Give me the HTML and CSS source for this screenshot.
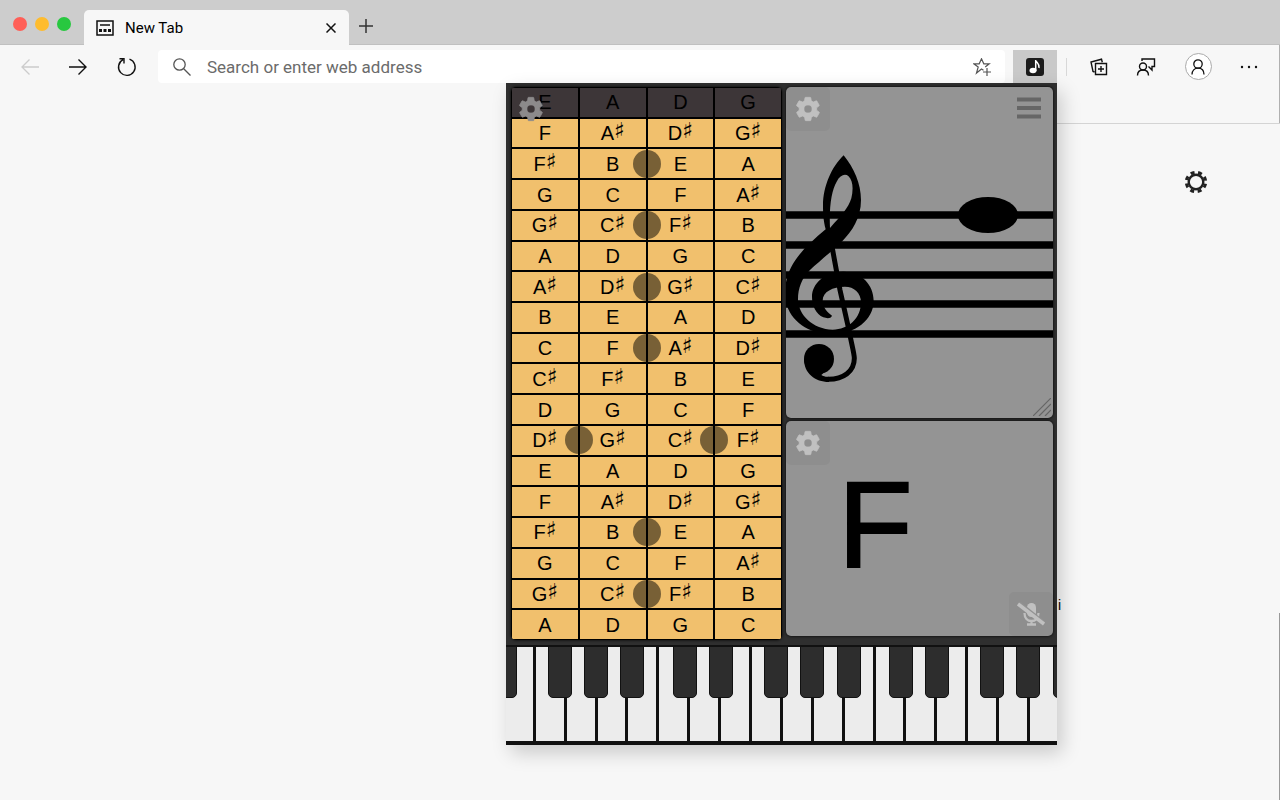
FILE: index.html
```html
<!DOCTYPE html>
<html lang="en">

<head>
    <meta charset="UTF-8">
    <title>New Tab</title>
    <link rel="stylesheet" href="styles.css">
</head>

<body>
    <svg class="defs" aria-hidden="true">
        <symbol id="gear" viewBox="0 0 24 24">
            <path d="M19.4 13a7.800 7.800 0 0 0 0-2l2.100-1.700a.5.5 0 0 0 .1-.6l-2-3.500a.5.5 0 0 0-.6-.2l-2.500 1a7.300 7.300 0 0 0-1.700-1L14.400 2.400a.5.5 0 0 0-.5-.4h-4a.5.5 0 0 0-.5.4L9 5a7.700 7.700 0 0 0-1.700 1l-2.500-1a.5.5 0 0 0-.6.2l-2 3.500a.5.5 0 0 0 .1.600L4.500 11a7.900 7.900 0 0 0 0 2l-2.100 1.700a.5.5 0 0 0-.1.600l2 3.500c.1.200.4.300.6.200l2.500-1a7.300 7.300 0 0 0 1.700 1l.4 2.600c0 .2.200.4.500.4h4c.2 0 .5-.2.500-.4l.4-2.600a7.700 7.700 0 0 0 1.700-1l2.500 1c.2.100.5 0 .6-.2l2-3.500a.5.5 0 0 0-.1-.6zM12 15.500a3.500 3.500 0 1 1 0-7 3.500 3.500 0 0 1 0 7z" fill="currentColor" stroke="currentColor" stroke-width=".6" />
        </symbol>
    </svg>

    <header class="browser">
        <div class="tabs">
            <div class="lights">
                <span class="light red"></span>
                <span class="light yellow"></span>
                <span class="light green"></span>
            </div>
            <div class="tab">
                <svg width="18" height="16" viewBox="0 0 18 16" fill="none" stroke="#111">
                    <rect x="1" y="1" width="16" height="14" stroke-width="1.500" />
                    <path d="M4 5h10" stroke-width="1.500" />
                    <path d="M3 10.500h3M7.500 10.500h3M12 10.500h3" stroke-width="3" />
                </svg>
                <span class="tab-title">New Tab</span>
                <button class="icon-btn tab-close" aria-label="Close tab">
                    <svg width="10" height="10" viewBox="0 0 10 10" stroke="#111" stroke-width="1.500"><path d="M.5.5l9 9M9.500.5l-9 9" /></svg>
                </button>
            </div>
            <button class="icon-btn new-tab" aria-label="New tab">
                <svg width="14" height="14" viewBox="0 0 14 14" stroke="#333" stroke-width="1.500"><path d="M7 0v14M0 7h14" /></svg>
            </button>
        </div>

        <div class="toolbar">
            <nav class="nav">
                <button class="icon-btn" aria-label="Back" disabled>
                    <svg width="18" height="16" viewBox="0 0 18 16" fill="none" stroke="#ccc" stroke-width="1.300"><path d="M18 8H1M8.500.5L1 8l7.500 7.500" /></svg>
                </button>
                <button class="icon-btn" aria-label="Forward">
                    <svg width="18" height="16" viewBox="0 0 18 16" fill="none" stroke="#111" stroke-width="1.400"><path d="M0 8h17M9.500.5L17 8l-7.500 7.500" /></svg>
                </button>
                <button class="icon-btn" aria-label="Refresh">
                    <svg width="20" height="20" viewBox="0 0 20 20" fill="none" stroke="#111" stroke-width="1.400"><path d="M12.500 2.200A8.300 8.300 0 1 1 6 2.700M2.500 1.700H7v4.800" /></svg>
                </button>
            </nav>
            <div class="address">
                <svg width="18" height="18" viewBox="0 0 18 18" fill="none" stroke="#555" stroke-width="1.300"><circle cx="6.500" cy="6.500" r="5.700" /><path d="M10.700 10.700L17.500 17.500" /></svg>
                <input type="text" aria-label="Address" placeholder="Search or enter web address">
                <button class="icon-btn" aria-label="Add to favorites">
                    <svg width="18" height="18" viewBox="0 0 18 18" fill="none" stroke="#555" stroke-width="1.200"><path d="M10.500 12.300L8.500 11 3.500 15l1.700-6L.8 5.800h5.400L8.500.8l2.300 5h5.400l-4 3.200M14 10v8M10 14h8" /></svg>
                </button>
            </div>
            <button class="icon-btn extension" aria-label="Music extension">
                <svg width="18" height="18" viewBox="0 0 18 18"><rect width="18" height="18" rx="3" fill="#1c1c1c" /><ellipse cx="7" cy="12.500" rx="3.500" ry="2.800" fill="#fff" /><path d="M9.700 13V2c.5 3 4.300 3.500 3.300 8" fill="none" stroke="#fff" stroke-width="1.500" /></svg>
            </button>
            <div class="actions">
                <button class="icon-btn" aria-label="Collections">
                    <svg width="18" height="18" viewBox="0 0 18 18" fill="none" stroke="#111" stroke-width="1.400"><path d="M5.500 5.500h11v11h-11zM11 8v6M8 11h6M4.500 14L3 13.500 1 4l10.500-2.800.8 3" /></svg>
                </button>
                <button class="icon-btn" aria-label="Feedback">
                    <svg width="20" height="18" viewBox="0 0 20 18" fill="none" stroke="#111" stroke-width="1.400"><circle cx="7" cy="8.500" r="3.500" /><path d="M1.500 17.500c0-3.500 2-5.500 5.500-5.500s5.500 2 5.500 5.500M6 3V1h12.500v7.500H16V12l-3.500-3.500" /></svg>
                </button>
                <button class="icon-btn profile" aria-label="Profile">
                    <svg width="14" height="16" viewBox="0 0 14 16" fill="none" stroke="#111" stroke-width="1.300"><circle cx="7" cy="5" r="4.200" /><path d="M1 15.500c0-4 2.500-6.300 6-6.300s6 2.300 6 6.300" /></svg>
                </button>
                <button class="icon-btn" aria-label="Settings and more">
                    <svg width="18" height="4" viewBox="0 0 18 4" fill="#111"><circle cx="2" cy="2" r="1.200" /><circle cx="9" cy="2" r="1.200" /><circle cx="16" cy="2" r="1.200" /></svg>
                </button>
            </div>
        </div>
    </header>

    <main class="page">
        <button class="icon-btn page-settings" aria-label="Page settings">
            <svg width="24" height="24" viewBox="0 0 24 24" fill="none" stroke="#222"><circle cx="12" cy="12" r="7.300" stroke-width="2.400" /><circle cx="12" cy="12" r="9.700" stroke-width="3" stroke-dasharray="4 3.620" stroke-dashoffset="-1.810" /></svg>
        </button>
        <span class="page-text">i</span>
        <div class="page-edge"></div>
    </main>

    <section class="popup">
        <div class="panels">
            <div class="fretboard">
                <button class="panel-btn" aria-label="Fretboard settings"><svg width="28" height="28"><use href="#gear" /></svg></button>
                <table class="notes">
                    <tr class="open"><td>E</td><td>A</td><td>D</td><td>G</td></tr>
                    <tr><td>F</td><td>A<sup>♯</sup></td><td>D<sup>♯</sup></td><td>G<sup>♯</sup></td></tr>
                    <tr><td>F<sup>♯</sup></td><td class="dot">B</td><td>E</td><td>A</td></tr>
                    <tr><td>G</td><td>C</td><td>F</td><td>A<sup>♯</sup></td></tr>
                    <tr><td>G<sup>♯</sup></td><td class="dot">C<sup>♯</sup></td><td>F<sup>♯</sup></td><td>B</td></tr>
                    <tr><td>A</td><td>D</td><td>G</td><td>C</td></tr>
                    <tr><td>A<sup>♯</sup></td><td class="dot">D<sup>♯</sup></td><td>G<sup>♯</sup></td><td>C<sup>♯</sup></td></tr>
                    <tr><td>B</td><td>E</td><td>A</td><td>D</td></tr>
                    <tr><td>C</td><td class="dot">F</td><td>A<sup>♯</sup></td><td>D<sup>♯</sup></td></tr>
                    <tr><td>C<sup>♯</sup></td><td>F<sup>♯</sup></td><td>B</td><td>E</td></tr>
                    <tr><td>D</td><td>G</td><td>C</td><td>F</td></tr>
                    <tr><td class="dot">D<sup>♯</sup></td><td>G<sup>♯</sup></td><td class="dot">C<sup>♯</sup></td><td>F<sup>♯</sup></td></tr>
                    <tr><td>E</td><td>A</td><td>D</td><td>G</td></tr>
                    <tr><td>F</td><td>A<sup>♯</sup></td><td>D<sup>♯</sup></td><td>G<sup>♯</sup></td></tr>
                    <tr><td>F<sup>♯</sup></td><td class="dot">B</td><td>E</td><td>A</td></tr>
                    <tr><td>G</td><td>C</td><td>F</td><td>A<sup>♯</sup></td></tr>
                    <tr><td>G<sup>♯</sup></td><td class="dot">C<sup>♯</sup></td><td>F<sup>♯</sup></td><td>B</td></tr>
                    <tr><td>A</td><td>D</td><td>G</td><td>C</td></tr>
                </table>
            </div>
            <div class="side">
                <div class="panel staff">
                    <button class="panel-btn" aria-label="Staff settings"><svg width="28" height="28"><use href="#gear" /></svg></button>
                    <button class="menu-btn" aria-label="Menu">
                        <svg width="24" height="22" viewBox="0 0 24 22" stroke="#666" stroke-width="4"><path d="M0 2.500h24M0 11h24M0 19.500h24" /></svg>
                    </button>
                    <svg class="score" viewBox="0 0 267 331">
                        <path d="M0 128h267M0 158h267M0 188h267M0 217h267M0 247h267" stroke="#000" stroke-width="7.500" />
                        <ellipse cx="202" cy="128" rx="30" ry="18" />
                        <g transform="translate(-6 53) scale(.3333)">
                            <path fill-rule="evenodd" d="M191 46C222 85 243 130 243 180C243 235 215 275 188 302C160 330 120 362 90 390C65 415 54 445 54 478C54 525 100 569 158 569C205 569 243 535 243 487C243 458 222 440 195 440C158 440 128 455 128 482C128 505 145 518 156 527C152 537 140 535 130 532C108 522 96 498 96 470C96 430 135 395 190 395C245 395 281 435 281 482C281 540 225 582 155 582C75 582 15 530 15 460C15 375 70 325 137 268C130 240 129 220 129 195C129 140 155 80 191 46ZM150 264C147 200 155 150 170 125C180 105 195 100 205 108C220 122 220 150 214 175C205 205 185 225 150 264Z" />
                            <path d="M157 325L180 450L208 575C214 610 223 640 223 655C223 695 190 718 145 718" fill="none" stroke="#000" stroke-width="15" />
                            <circle cx="117" cy="657" r="45" />
                            <path d="M72 657C72 700 105 726 147 726V710C138 711 130 709 124 705L150 680Z" />
                        </g>
                    </svg>
                    <svg class="resize" width="18" height="18" viewBox="0 0 18 18" stroke="#666" stroke-width="1.200"><path d="M0 18L18 0M6 18L18 6M12 18l6-6" /></svg>
                </div>
                <div class="panel letter">
                    <button class="panel-btn" aria-label="Note settings"><svg width="28" height="28"><use href="#gear" /></svg></button>
                    <span class="current-note">F</span>
                    <button class="panel-btn mic" aria-label="Microphone off">
                        <svg width="28" height="26" viewBox="0 0 28 26" fill="none" stroke="currentColor">
                            <rect x="10" y="2" width="9" height="14" rx="4.500" fill="currentColor" stroke="none" />
                            <path d="M7.500 12c0 5 3 8 7 8s7-3 7-8M14.500 19v4M10 23.500h9" stroke-width="2.300" />
                            <path d="M3 1.500l25 20" stroke="#929292" stroke-width="2" />
                            <path d="M1 3l26 20" stroke-width="3.500" />
                        </svg>
                    </button>
                </div>
            </div>
        </div>
        <div class="piano">
            <div class="key"><button class="white" aria-label="D"></button><button class="black d" aria-label="D sharp"></button></div>
            <div class="key"><button class="white" aria-label="E"></button></div>
            <div class="key"><button class="white" aria-label="F"></button><button class="black f" aria-label="F sharp"></button></div>
            <div class="key"><button class="white" aria-label="G"></button><button class="black g" aria-label="G sharp"></button></div>
            <div class="key"><button class="white" aria-label="A"></button><button class="black a" aria-label="A sharp"></button></div>
            <div class="key"><button class="white" aria-label="B"></button></div>
            <div class="key"><button class="white" aria-label="C"></button><button class="black c" aria-label="C sharp"></button></div>
            <div class="key"><button class="white" aria-label="D"></button><button class="black d" aria-label="D sharp"></button></div>
            <div class="key"><button class="white" aria-label="E"></button></div>
            <div class="key"><button class="white" aria-label="F"></button><button class="black f" aria-label="F sharp"></button></div>
            <div class="key"><button class="white" aria-label="G"></button><button class="black g" aria-label="G sharp"></button></div>
            <div class="key"><button class="white" aria-label="A"></button><button class="black a" aria-label="A sharp"></button></div>
            <div class="key"><button class="white" aria-label="B"></button></div>
            <div class="key"><button class="white" aria-label="C"></button><button class="black c" aria-label="C sharp"></button></div>
            <div class="key"><button class="white" aria-label="D"></button><button class="black d" aria-label="D sharp"></button></div>
            <div class="key"><button class="white" aria-label="E"></button></div>
            <div class="key"><button class="white" aria-label="F"></button><button class="black f" aria-label="F sharp"></button></div>
            <div class="key"><button class="white" aria-label="G"></button><button class="black g" aria-label="G sharp"></button></div>
            <div class="key"><button class="white" aria-label="A"></button><button class="black a" aria-label="A sharp"></button></div>
        </div>
    </section>
</body>

</html>
```
FILE: styles.css
```css
* {
    box-sizing: border-box;
}

body {
    display: flex;
    flex-direction: column;
    margin: 0;
    min-height: 100vh;
    background: #f7f7f7;
    font-family: "Liberation Sans", Arial, sans-serif;
    color: #000;
    position: relative;
    overflow: hidden;
}

svg {
    display: block;
}

.defs {
    position: absolute;
    width: 0;
    height: 0;
}

.icon-btn {
    display: flex;
    align-items: center;
    justify-content: center;
    padding: 0;
    border: none;
    background: transparent;
}

/* browser chrome */
.tabs {
    display: flex;
    align-items: flex-end;
    height: 45px;
    padding-left: 13px;
    background: #cdcdcd;
    border-bottom: 1px solid #c0c0c0;
}

.lights {
    display: flex;
    gap: 8px;
    width: 71px;
    padding-bottom: 13px;
}

.light {
    width: 14px;
    height: 14px;
    border-radius: 50%;
}

.red {
    background: #ff5f57;
}

.yellow {
    background: #febc2e;
}

.green {
    background: #28c840;
}

.tab {
    display: flex;
    align-items: center;
    width: 265px;
    height: 35px;
    margin-bottom: -1px;
    padding: 0 13px 0 12px;
    background: #f7f7f7;
    border-radius: 5px 5px 0 0;
}

.tab-title {
    flex: 1;
    padding-left: 11px;
    font-family: Roboto, sans-serif;
    font-size: 15px;
}

.new-tab {
    padding: 0 10px 11px;
}

.toolbar {
    display: flex;
    align-items: center;
    height: 78px;
    padding-bottom: 35px;
    border-right: 1px solid #b0b0b0;
}

.nav {
    display: flex;
    justify-content: space-between;
    width: 158px;
    padding: 0 21px;
}

.address {
    display: flex;
    align-items: center;
    flex: 1;
    height: 33px;
    padding: 0 14px 0 15px;
    background: #fff;
    border-radius: 4px;
}

.address input {
    flex: 1;
    padding: 0 0 0 16px;
    border: none;
    outline: none;
    background: transparent;
    font-family: Roboto, sans-serif;
    font-size: 17px;
}

.address input::placeholder {
    color: #6b6b6b;
}

.extension {
    width: 44px;
    height: 33px;
    margin-left: 8px;
    background: #c9c9c9;
}

.actions {
    display: flex;
    align-items: center;
    justify-content: space-between;
    width: 192px;
    margin: 0 21px 0 9px;
    padding-left: 23px;
    border-left: 1px solid #d8d8d8;
    height: 18px;
}

.profile {
    width: 27px;
    height: 27px;
    border: 1px solid #aaa;
    border-radius: 50%;
    background: #fff;
}

.page {
    display: flex;
    flex: 1;
    flex-direction: column;
    align-items: flex-end;
    width: 223px;
    margin-left: auto;
    border-top: 1px solid #d4d4d4;
}

.page-settings {
    margin: 46px 72px 0 0;
}

.page-text {
    margin: 403px 219px 0 0;
    font-size: 14px;
    line-height: 16px;
}

.page-edge {
    flex: 1;
    border-right: 1px solid #999;
}

/* extension popup */
.popup {
    position: absolute;
    top: 83px;
    right: 223px;
    width: 551px;
    background: #2f2f2f;
    box-shadow: 5px 8px 18px rgba(0, 0, 0, 0.18);
    overflow: hidden;
}

.panels {
    display: flex;
    gap: 4px;
    padding: 4px 4px 5px 5px;
}

.fretboard {
    position: relative;
    flex: 1;
    border-radius: 5px;
    overflow: hidden;
    box-shadow: 0 0 3px #000;
}

.notes {
    table-layout: fixed;
    width: calc(100% + 2px);
    height: 555px;
    margin: -1px;
    border-collapse: collapse;
}

.notes td {
    position: relative;
    padding: 0;
    border: 2px solid #000;
    background: #f1c06d;
    text-align: center;
    font-size: 20px;
    line-height: 20px;
}

.notes .open td {
    background: #3d3638;
}

.notes sup {
    font-family: "DejaVu Sans", sans-serif;
    font-size: 22px;
    line-height: 0;
    vertical-align: 2px;
}

.dot::after {
    content: "";
    position: absolute;
    z-index: 1;
    top: 50%;
    right: -15px;
    width: 28px;
    height: 28px;
    margin-top: -14px;
    border-radius: 50%;
    background: rgba(0, 0, 0, 0.5);
}

.side {
    display: flex;
    flex-direction: column;
    gap: 3px;
    width: 267px;
    padding-bottom: 4px;
}

.panel {
    position: relative;
    background: #949494;
    border-radius: 5px;
    box-shadow: 0 0 3px #000;
    overflow: hidden;
}

.letter {
    flex: 1;
    display: flex;
    align-items: center;
}

.panel-btn {
    position: absolute;
    z-index: 2;
    top: 0;
    left: 0;
    display: flex;
    align-items: center;
    justify-content: center;
    width: 44px;
    height: 44px;
    padding: 0;
    border: none;
    border-radius: 5px;
    background: rgba(0, 0, 0, 0.04);
    color: #c0c0c0;
}

.fretboard .panel-btn {
    left: -2px;
    background: transparent;
    color: #8c8a8b;
}

.panel-btn.mic {
    top: auto;
    left: auto;
    right: 0;
    bottom: 0;
}

.menu-btn {
    position: absolute;
    top: 10px;
    right: 12px;
    padding: 0;
    border: none;
    background: transparent;
}

.score {
    width: 100%;
}

.resize {
    position: absolute;
    right: 2px;
    bottom: 2px;
}

.current-note {
    padding: 0 0 8px 52px;
    font-size: 122px;
    line-height: 122px;
    -webkit-text-stroke: 2px #000;
}

.piano {
    display: flex;
    height: 100px;
    padding: 0 0 4px;
    margin: 0 -2px 0 -34px;
    background: #111;
}

.key {
    position: relative;
    flex: 1;
}

.white {
    width: 100%;
    height: 100%;
    padding: 0;
    border: solid #111;
    border-width: 2px 1px 0 2px;
    background: #ececec;
}

.black {
    position: absolute;
    z-index: 1;
    top: 1px;
    width: 24px;
    height: 52px;
    padding: 0;
    border: 1px solid #111;
    border-radius: 0 0 5px 5px;
    background: #2d2d2d;
}

.f {
    right: -7px;
}

.g {
    right: -12px;
}

.a {
    right: -18px;
}

.c {
    right: -9px;
}

.d {
    right: -14px;
}
```
